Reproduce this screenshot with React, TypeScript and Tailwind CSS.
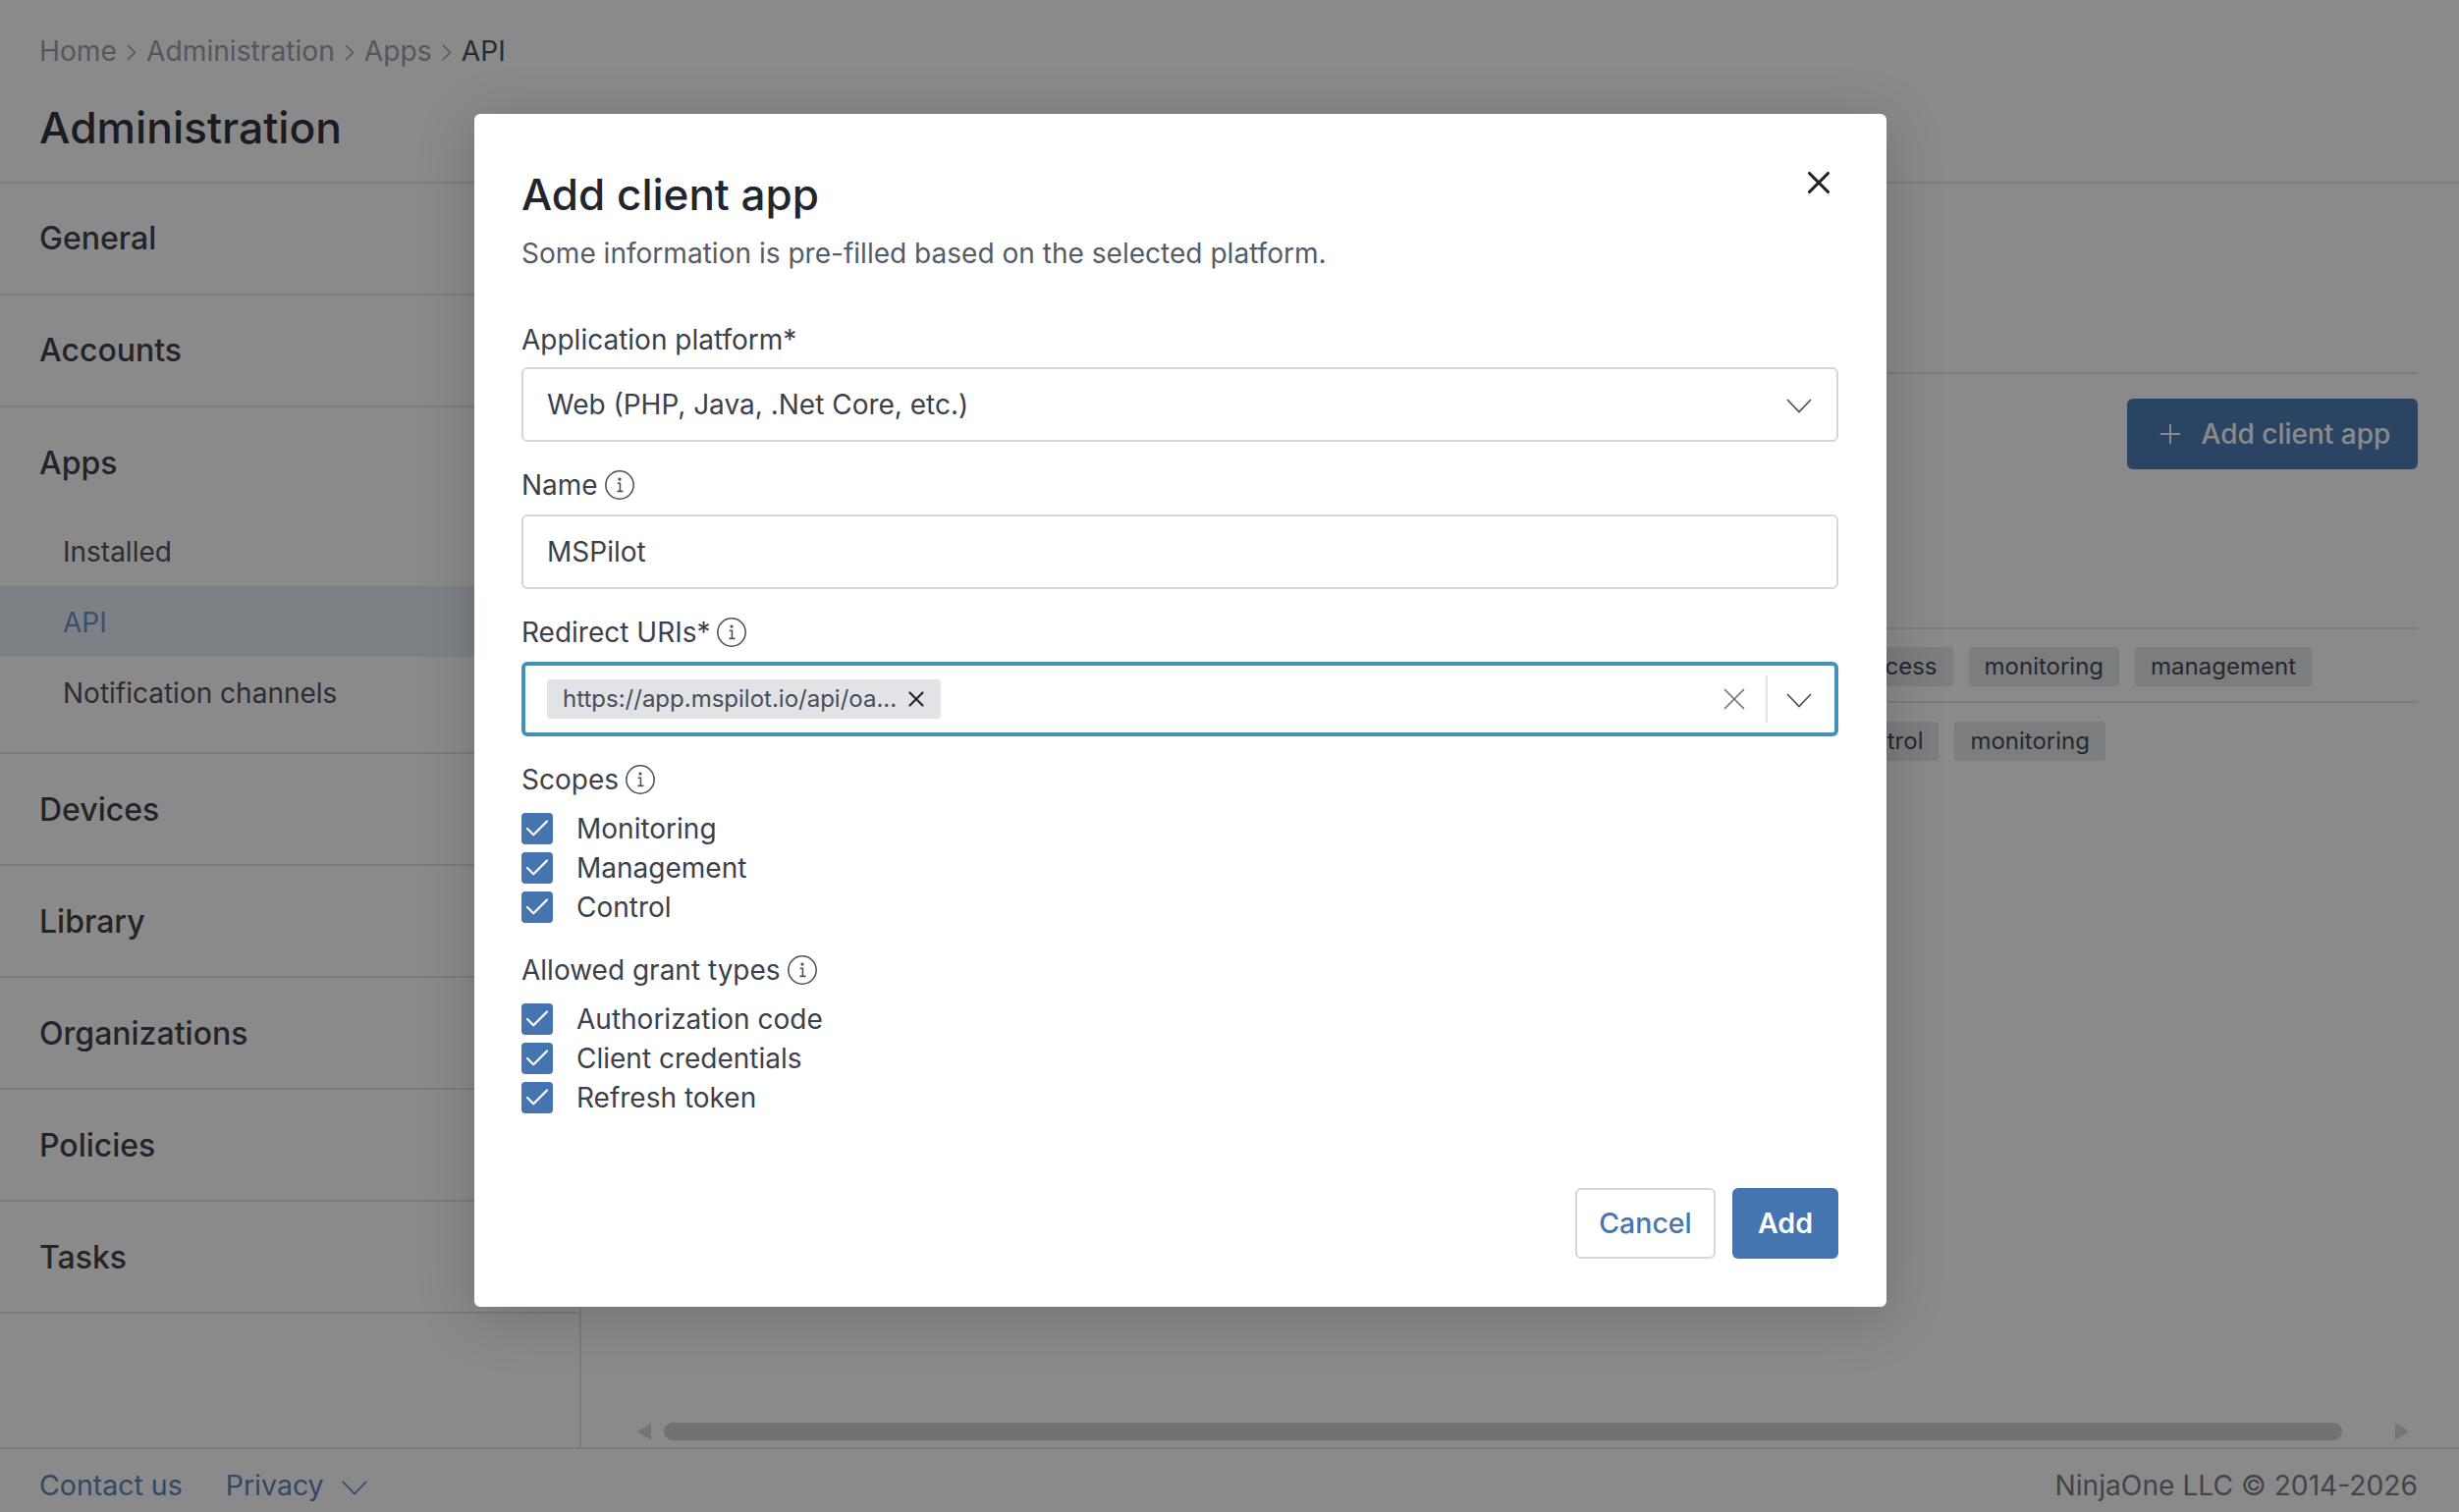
import { Check, Plus, X } from "lucide-react";

const topNav = ["General", "Accounts"];
const appSubNav = ["Installed", "API", "Notification channels"];
const bottomNav = ["Devices", "Library", "Organizations", "Policies", "Tasks"];

function InfoIcon() {
  return (
    <svg viewBox="0 0 24 24" className="w-[34px] h-[34px] shrink-0 text-[#4b505b]" fill="none" stroke="currentColor" strokeWidth="1.1">
      <circle cx="12" cy="12" r="10" />
      <path d="M10.4 10.8h1.9v5.6M10.2 16.5h4.2" />
      <circle cx="12" cy="7.8" r="0.6" fill="currentColor" />
    </svg>
  );
}

function Chevron({ className }: { className?: string }) {
  return (
    <svg viewBox="0 0 26 15" className={`w-[26px] h-[15px] shrink-0 ${className ?? ""}`} fill="none" stroke="currentColor" strokeWidth="1.7">
      <path d="M1 1l12 12.5L25 1" />
    </svg>
  );
}

function CrumbSep() {
  return (
    <svg viewBox="0 0 10 17" className="w-[10px] h-[17px] shrink-0 mt-[3px]" fill="none" stroke="currentColor" strokeWidth="1.6">
      <path d="M1 1l7.5 7.5L1 16" />
    </svg>
  );
}

function NavRow({ label, className }: { label: string; className?: string }) {
  return (
    <div className={`h-[114px] flex items-center pl-10 border-b-2 border-[#e4e6ea] text-[32px] font-medium text-[#3f434d] ${className ?? ""}`}>
      {label}
    </div>
  );
}

function Tag({ label }: { label: string }) {
  return (
    <span className="h-10 px-4 flex items-center rounded bg-[#e6e7ea] text-[24px] text-[#454a55]">
      {label}
    </span>
  );
}

function CheckRow({ label }: { label: string }) {
  return (
    <div className="h-10 flex items-center gap-6">
      <span className="w-8 h-8 rounded bg-[#4475b0] flex items-center justify-center">
        <Check className="w-[30px] h-[30px] text-white" strokeWidth={1.7} />
      </span>
      <span className="text-[28px] text-[#3c404b]">{label}</span>
    </div>
  );
}

function FieldLabel({ label, info }: { label: string; info?: boolean }) {
  return (
    <div className="h-[74px] flex items-center gap-[5px] pt-[13px] text-[28px] text-[#3c404b]">
      {label}
      {info && <InfoIcon />}
    </div>
  );
}

export default function App() {
  return (
    <div className="relative w-[2504px] h-[1540px] overflow-hidden bg-white font-['Inter',sans-serif] flex flex-col">
      {/* Page behind the dialog */}
      <header className="h-[187px] shrink-0 border-b-2 border-[#e4e6ea] pl-10 pt-[31px]">
        <div className="flex items-center gap-[10px] text-[28.2px] leading-[42px] text-[#9da2ad]">
          <span>Home</span>
          <CrumbSep />
          <span>Administration</span>
          <CrumbSep />
          <span>Apps</span>
          <CrumbSep />
          <span className="text-[#4c505a]">API</span>
        </div>
        <h1 className="mt-[29px] text-[44.4px] leading-[56px] font-medium text-[#32353d]">Administration</h1>
      </header>

      <div className="flex-1 flex min-h-0">
        <aside className="w-[592px] shrink-0 border-r-2 border-[#e4e6ea]">
          {topNav.map((label) => (
            <NavRow key={label} label={label} />
          ))}
          <div className="h-[353px] border-b-2 border-[#e4e6ea]">
            <div className="h-[114px] flex items-center pl-10 text-[32px] font-medium text-[#3f434d]">Apps</div>
            <div className="-mt-[4px] flex flex-col">
              {appSubNav.map((label) => (
                <div
                  key={label}
                  className={`h-[72px] flex items-center pl-16 pt-[2px] text-[28px] ${label === "API" ? "bg-[#e7eef6] text-[#6c93c4]" : "text-[#4f535d]"}`}
                >
                  {label}
                </div>
              ))}
            </div>
          </div>
          {bottomNav.map((label) => (
            <NavRow key={label} label={label} className="pt-[2px]" />
          ))}
        </aside>

        <main className="flex-1 flex flex-col pr-[42px]">
          <div className="h-[194px] border-b-2 border-[#e4e6ea]" />
          <div className="h-[260px] flex justify-end pt-[25px] border-b-2 border-[#e4e6ea]">
            <button className="h-[72px] w-[296px] rounded-md bg-[#4f7fb8] text-white text-[28px] font-medium flex items-center justify-center gap-4">
              <Plus className="w-8 h-8" strokeWidth={1.5} />
              Add client app
            </button>
          </div>
          <div className="h-[75px] flex items-center justify-end gap-4 border-b-2 border-[#e4e6ea] pt-[2px] pr-[108px]">
            <Tag label="process" />
            <Tag label="monitoring" />
            <Tag label="management" />
          </div>
          <div className="h-[75px] flex items-center justify-end gap-4 pt-[2px] pr-[318px]">
            <Tag label="control" />
            <Tag label="monitoring" />
          </div>
          <div className="flex-1" />
          <div className="h-[26px] mb-[3px] flex items-center gap-[13px] pl-[57px] -mr-[42px] pr-[51px]">
            <span className="w-0 h-0 border-y-[9px] border-y-transparent border-r-[14px] border-r-[#d7d9dd]" />
            <span className="flex-1 h-[18px] rounded-full bg-[#d0d2d6] mr-[41px]" />
            <span className="w-0 h-0 border-y-[9px] border-y-transparent border-l-[14px] border-l-[#d7d9dd]" />
          </div>
        </main>
      </div>

      <footer className="h-[66px] shrink-0 border-t-2 border-[#e4e6ea] flex items-center justify-between pl-10 pr-[42px] pt-[11px] text-[28.2px]">
        <div className="flex items-center text-[28.5px] text-[#5e86b8]">
          <span>Contact us</span>
          <span className="ml-[44px]">Privacy</span>
          <Chevron className="ml-[18px] mt-[4px] w-[20px] h-[12px]" />
        </div>
        <span className="text-[#7b7f89]">NinjaOne LLC © 2014-2026</span>
      </footer>

      {/* Dimmed backdrop */}
      <div className="absolute inset-0 bg-[rgba(0,0,0,0.46)]" />

      {/* Dialog */}
      <div className="absolute left-[483px] top-[116px] w-[1438px] h-[1215px] bg-white rounded-md shadow-[0_10px_60px_rgba(0,0,0,0.18)] pl-[48px] pr-[49px] pt-[50px] flex flex-col">
        <button className="absolute right-[50px] top-[51px] text-[#1e2026]">
          <X className="w-[38px] h-[38px]" strokeWidth={2} />
        </button>
        <h2 className="text-[44px] leading-[64px] font-medium text-[#22252c]">Add client app</h2>
        <p className="mt-[8px] text-[28.05px] leading-[40px] text-[#565b66]">Some information is pre-filled based on the selected platform.</p>

        <div className="mt-[34px] flex flex-col">
          <div className="h-[62px] flex items-center pt-[6px] text-[28px] text-[#3c404b]">Application platform*</div>
          <div className="h-[76px] rounded-md border-2 border-[#d3d6dc] flex items-center justify-between pl-6 pr-[25px] text-[28px] text-[#3c404b]">
            Web (PHP, Java, .Net Core, etc.)
            <Chevron className="text-[#4b505b] mt-[2px]" />
          </div>

          <FieldLabel label="Name" info />
          <div className="h-[76px] rounded-md border-2 border-[#d3d6dc] flex items-center pl-6 text-[28px] text-[#3c404b]">MSPilot</div>

          <FieldLabel label="Redirect URIs*" info />
          <div className="h-[76px] rounded-md border-4 border-[#4292b8] flex items-center pl-[22px] pr-[23px]">
            <span className="h-10 rounded bg-[#e1e3e7] flex items-center gap-[7px] pl-[16px] pr-[12px] text-[24px] text-[#484d58]">
              https://app.mspilot.io/api/oa...
              <X className="w-[26px] h-[26px] text-[#22252c]" strokeWidth={2} />
            </span>
            <X className="ml-auto w-[38px] h-[38px] text-[#6f737c]" strokeWidth={1.1} />
            <span className="ml-[13px] w-[2px] h-12 bg-[#e1e3e7]" />
            <Chevron className="ml-[19px] mt-[2px] text-[#4b505b]" />
          </div>

          <FieldLabel label="Scopes" info />
          <div className="flex flex-col">
            <CheckRow label="Monitoring" />
            <CheckRow label="Management" />
            <CheckRow label="Control" />
          </div>

          <FieldLabel label="Allowed grant types" info />
          <div className="flex flex-col">
            <CheckRow label="Authorization code" />
            <CheckRow label="Client credentials" />
            <CheckRow label="Refresh token" />
          </div>
        </div>

        <div className="mt-auto mb-[49px] flex justify-end gap-[17px]">
          <button className="h-[72px] w-[143px] rounded-md border-2 border-[#d3d6dc] text-[28.5px] font-medium text-[#4a75ad]">Cancel</button>
          <button className="h-[72px] w-[108px] rounded-md bg-[#4475b0] text-[28.5px] font-semibold text-white">Add</button>
        </div>
      </div>
    </div>
  );
}
